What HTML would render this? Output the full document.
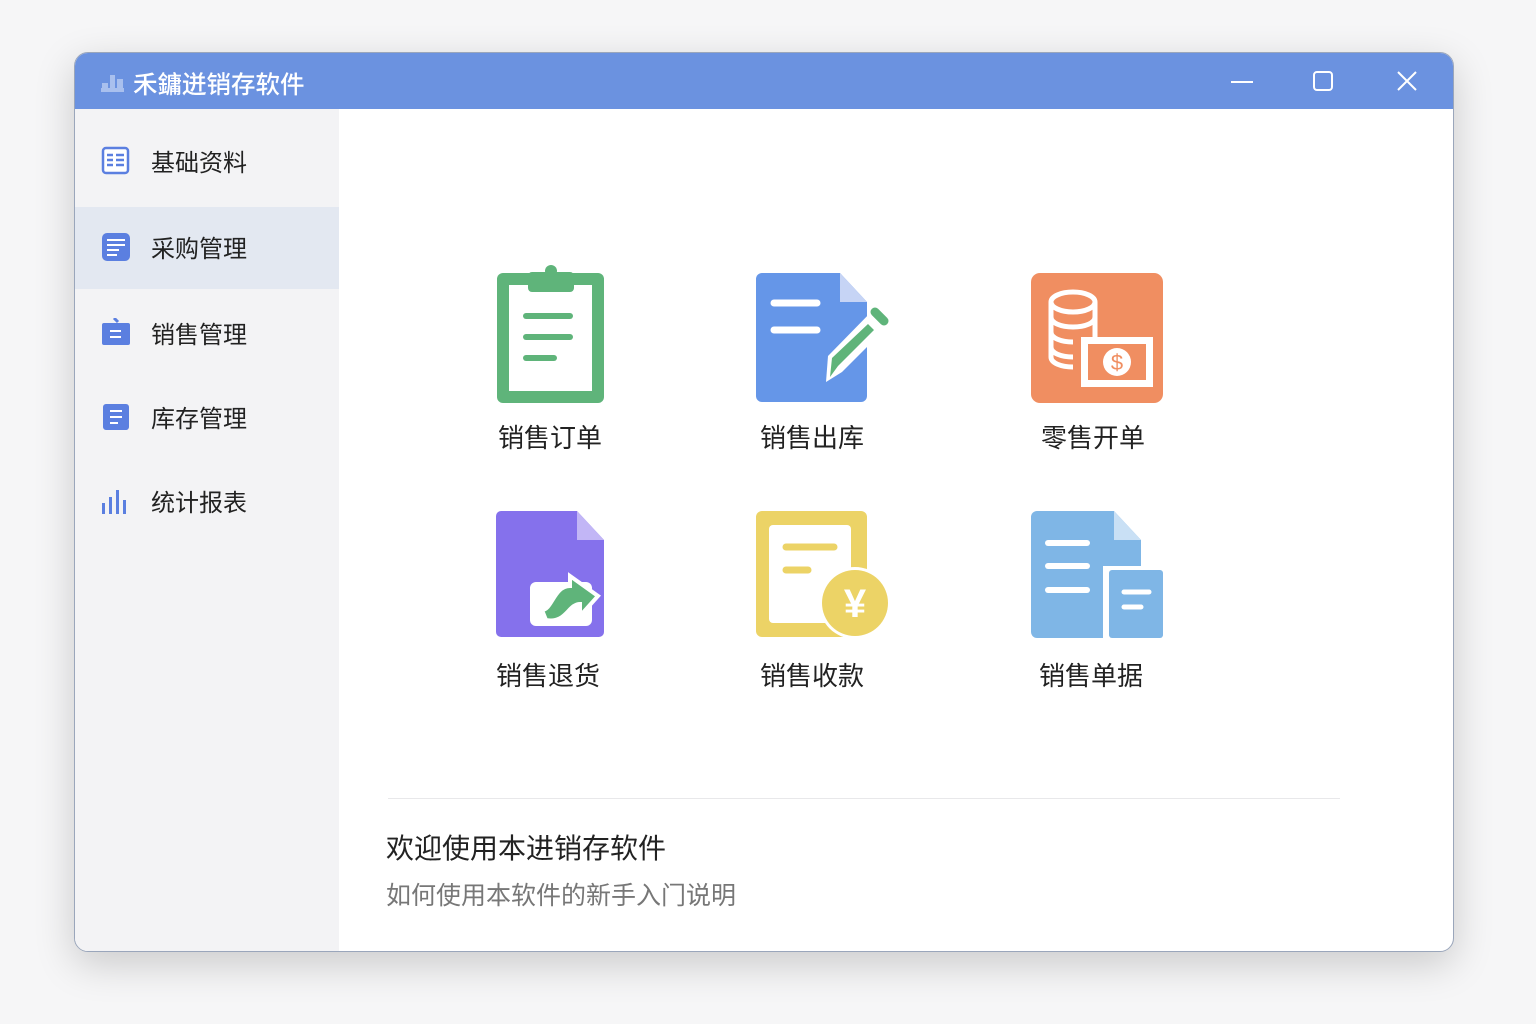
<!DOCTYPE html>
<html><head><meta charset="utf-8"><style>
*{margin:0;padding:0;box-sizing:border-box}
body{width:1536px;height:1024px;background:#f6f6f7;position:relative;overflow:hidden;font-family:"Liberation Sans","Noto Sans CJK SC",sans-serif}
.win{position:absolute;left:74px;top:52px;width:1380px;height:900px;border-radius:14px;background:#fff;overflow:hidden;box-shadow:0 12px 40px rgba(0,0,0,.18);border:1px solid #9aa6bb}
.tb{position:absolute;left:0;top:0;width:100%;height:56px;background:#6b92e0}
.title{position:absolute;left:58px;top:13px;color:#fff;font-size:24.5px;font-weight:500}
.side{position:absolute;left:0;top:56px;width:264px;bottom:0;background:#f3f3f5}
.item{position:absolute;left:0;width:264px;height:82px}
.item .t{position:absolute;left:76px;top:24px;font-size:24px;color:#222}
.item svg{position:absolute;left:26px;top:27px}
.lbl{position:absolute;font-size:26px;color:#222;width:200px;text-align:center}
.ic{position:absolute}
</style></head><body>
<div class="win">
<div class="tb">
<svg style="position:absolute;left:26px;top:18px" width="24" height="22"><g fill="#a9c0ee"><rect x="1" y="12" width="6" height="9"/><rect x="9" y="4" width="5" height="17"/><rect x="16" y="8" width="6" height="13"/><rect x="0" y="17" width="23" height="4"/></g></svg>
<div class="title">禾鏞迸销存软件</div>
<svg style="position:absolute;left:1154px;top:16px" width="30" height="24"><line x1="2" y1="13" x2="24" y2="13" stroke="#fff" stroke-width="2"/></svg>
<svg style="position:absolute;left:1236px;top:16px" width="26" height="26"><rect x="3" y="3" width="18" height="18" rx="3" fill="none" stroke="#fff" stroke-width="2"/></svg>
<svg style="position:absolute;left:1320px;top:16px" width="26" height="26"><path d="M3 3L21 21M21 3L3 21" stroke="#fff" stroke-width="2"/></svg>
</div>
<div class="side">
<div class="item" style="top:10px"><svg width="30" height="30"><rect x="2" y="2" width="25" height="25" rx="3" fill="#fff" stroke="#5b7fe0" stroke-width="2.5"/><g stroke="#5b7fe0" stroke-width="2.5"><line x1="6" y1="9" x2="12" y2="9"/><line x1="6" y1="14" x2="12" y2="14"/><line x1="6" y1="19" x2="12" y2="19"/><line x1="15" y1="9" x2="23" y2="9"/><line x1="15" y1="14" x2="23" y2="14"/><line x1="15" y1="19" x2="23" y2="19"/></g></svg><div class="t">基础资料</div></div>
<div class="item" style="top:98px;background:#e3e8f1"><svg width="30" height="30" style="top:25px"><rect x="1" y="1" width="28" height="28" rx="5" fill="#5b7fe0"/><g stroke="#fff" stroke-width="2"><line x1="6" y1="8" x2="24" y2="8"/><line x1="6" y1="13" x2="24" y2="13"/><line x1="6" y1="18" x2="18" y2="18"/><line x1="6" y1="23" x2="16" y2="23"/></g></svg><div class="t" style="top:22px">采购管理</div></div>
<div class="item" style="top:182px"><svg width="30" height="30"><rect x="1" y="5" width="28" height="22" rx="2" fill="#5b7fe0"/><path d="M13 0l4 4" stroke="#5b7fe0" stroke-width="3"/><g stroke="#fff" stroke-width="2"><line x1="9" y1="13" x2="20" y2="13"/><line x1="9" y1="19" x2="20" y2="19"/></g></svg><div class="t">销售管理</div></div>
<div class="item" style="top:266px"><svg width="30" height="30"><rect x="2" y="2" width="26" height="26" rx="3" fill="#5b7fe0"/><g stroke="#fff" stroke-width="2"><line x1="9" y1="9" x2="21" y2="9"/><line x1="9" y1="15" x2="21" y2="15"/><line x1="9" y1="21" x2="17" y2="21"/></g></svg><div class="t">库存管理</div></div>
<div class="item" style="top:350px"><svg width="30" height="30"><g fill="#5b7fe0"><rect x="1" y="17" width="3" height="11"/><rect x="8" y="11" width="3" height="17"/><rect x="15" y="4" width="3" height="24"/><rect x="22" y="14" width="3" height="14"/></g></svg><div class="t">统计报表</div></div>
</div>
</div>
<svg class="ic" style="left:496px;top:265px" width="110" height="140"><rect x="1" y="8" width="107" height="130" rx="6" fill="#5fb47a"/><rect x="13" y="20" width="83" height="106" fill="#fff"/><rect x="32" y="7" width="46" height="20" rx="4" fill="#5fb47a"/><circle cx="55" cy="6" r="6" fill="#5fb47a"/><g stroke="#5fb47a" stroke-width="6" stroke-linecap="round"><line x1="30" y1="51" x2="74" y2="51"/><line x1="30" y1="72" x2="74" y2="72"/><line x1="30" y1="93" x2="58" y2="93"/></g></svg>
<svg class="ic" style="left:756px;top:272px" width="140" height="132"><path d="M6 1H84L111 30V124a6 6 0 0 1-6 6H6a6 6 0 0 1-6-6V7a6 6 0 0 1 6-6z" fill="#6596e8"/><path d="M84 1L111 30H84z" fill="#c6d4f5"/><g stroke="#fff" stroke-width="7" stroke-linecap="round"><line x1="18" y1="31" x2="61" y2="31"/><line x1="18" y1="58" x2="61" y2="58"/></g><path d="M70 110L72 84L119 36L134 52L86 100Z" fill="#fff"/><path d="M74 105L76 86L112 52L118 58L82 94Z" fill="#5fb47a"/><path d="M119 40L128 49" stroke="#5fb47a" stroke-width="9" stroke-linecap="round"/></svg>
<svg class="ic" style="left:1031px;top:272px" width="133" height="132"><rect x="0" y="1" width="132" height="130" rx="9" fill="#f08e61"/><g fill="none" stroke="#fff" stroke-width="5"><ellipse cx="42" cy="30" rx="22" ry="10"/><path d="M20 30v55c0 6 10 10 22 10M20 45c0 6 10 10 22 10s22-4 22-10M20 60c0 6 10 10 22 10M20 75c0 6 10 10 22 10M64 30v40"/></g><rect x="50" y="65" width="72" height="50" fill="#fff"/><rect x="57" y="72" width="58" height="36" fill="#f08e61"/><circle cx="86" cy="90" r="14" fill="#fff"/><text x="86" y="98" text-anchor="middle" font-size="22" fill="#f08e61" font-family="Liberation Sans">$</text></svg>
<div class="lbl" style="left:450px;top:418px">销售订单</div>
<div class="lbl" style="left:712px;top:418px">销售出库</div>
<div class="lbl" style="left:993px;top:418px">零售开单</div>
<svg class="ic" style="left:496px;top:510px" width="116" height="130"><path d="M5 1H81L108 30V122a5 5 0 0 1-5 5H5a5 5 0 0 1-5-5V6a5 5 0 0 1 5-5z" fill="#8571ec"/><path d="M81 1L108 30H81z" fill="#c2b6f6"/><rect x="34" y="72" width="62" height="44" rx="6" fill="#fff"/><path d="M46 100c10 0 12-24 28-24V66L102 86L84 106V94c-12 0-14 20-34 16z" fill="#5fb47a" stroke="#fff" stroke-width="4"/></svg>
<svg class="ic" style="left:756px;top:510px" width="136" height="130"><rect x="0" y="1" width="111" height="126" rx="6" fill="#ecd366"/><rect x="13" y="15" width="82" height="98" rx="4" fill="#fff"/><g stroke="#ecd366" stroke-width="7" stroke-linecap="round"><line x1="30" y1="37" x2="78" y2="37"/><line x1="30" y1="60" x2="52" y2="60"/></g><circle cx="99" cy="93" r="36" fill="#fff"/><circle cx="99" cy="93" r="33" fill="#ecd366"/><text x="99" y="107" text-anchor="middle" font-size="40" font-weight="bold" fill="#fff" font-family="Liberation Sans,Noto Sans CJK SC">¥</text></svg>
<svg class="ic" style="left:1031px;top:510px" width="133" height="130"><path d="M6 1H83L110 30V122a6 6 0 0 1-6 6H6a6 6 0 0 1-6-6V7a6 6 0 0 1 6-6z" fill="#7fb6e6"/><path d="M83 1L110 30H83z" fill="#c9e0f5"/><g stroke="#fff" stroke-width="6" stroke-linecap="round"><line x1="17" y1="33" x2="56" y2="33"/><line x1="17" y1="56" x2="56" y2="56"/><line x1="17" y1="80" x2="56" y2="80"/></g><rect x="72" y="56" width="62" height="74" fill="#fff"/><rect x="78" y="60" width="54" height="68" rx="3" fill="#7fb6e6"/><g stroke="#fff" stroke-width="5" stroke-linecap="round"><line x1="93" y1="82" x2="118" y2="82"/><line x1="93" y1="97" x2="110" y2="97"/></g></svg>
<div class="lbl" style="left:448px;top:656px">销售退货</div>
<div class="lbl" style="left:712px;top:656px">销售收款</div>
<div class="lbl" style="left:991px;top:656px">销售单据</div>
<div style="position:absolute;left:388px;top:798px;width:952px;height:1px;background:#e8e8ea"></div>
<div style="position:absolute;left:386px;top:827px;font-size:28px;color:#222">欢迎使用本进销存软件</div>
<div style="position:absolute;left:386px;top:876px;font-size:25px;color:#777">如何使用本软件的新手入门说明</div>
</body></html>
